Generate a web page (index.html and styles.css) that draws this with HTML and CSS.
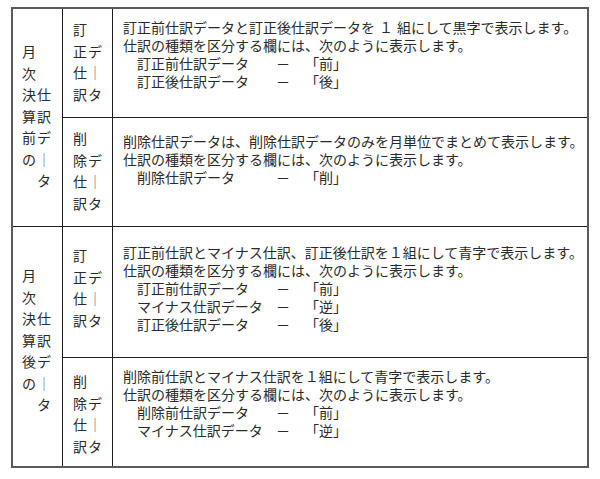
FILE: index.html
```html
<!DOCTYPE html>
<html lang="ja">
<head>
<meta charset="utf-8">
<title>仕訳データの表示</title>
<link rel="stylesheet" href="styles.css">
</head>
<body>
<div class="sheet">
  <div class="cat cat-span">
    <div class="stack">
      <div>月</div><div>次</div><div>決仕</div><div>算訳</div><div>前デ</div><div>の<span class="bar">｜</span></div><div>　タ</div>
    </div>
  </div>
  <div class="kind">
    <div class="stack">
      <div>訂</div><div>正デ</div><div>仕<span class="bar">｜</span></div><div>訳タ</div>
    </div>
  </div>
  <div class="desc desc-1">
    <p class="line">訂正前仕訳データと訂正後仕訳データを<span class="num">１</span>組にして黒字で表示します。</p>
    <p class="line">仕訳の種類を区分する欄には、次のように表示します。</p>
    <div class="codes">
      <span>訂正前仕訳データ</span><span>－</span><span>「前」</span>
      <span>訂正後仕訳データ</span><span>－</span><span>「後」</span>
    </div>
  </div>
  <div class="kind">
    <div class="stack">
      <div>削</div><div>除デ</div><div>仕<span class="bar">｜</span></div><div>訳タ</div>
    </div>
  </div>
  <div class="desc desc-2">
    <p class="line">削除仕訳データは、削除仕訳データのみを月単位でまとめて表示します。</p>
    <p class="line">仕訳の種類を区分する欄には、次のように表示します。</p>
    <div class="codes">
      <span>削除仕訳データ</span><span>－</span><span>「削」</span>
    </div>
  </div>

  <div class="cat cat-span cat-low">
    <div class="stack">
      <div>月</div><div>次</div><div>決仕</div><div>算訳</div><div>後デ</div><div>の<span class="bar">｜</span></div><div>　タ</div>
    </div>
  </div>
  <div class="kind kind-up">
    <div class="stack">
      <div>訂</div><div>正デ</div><div>仕<span class="bar">｜</span></div><div>訳タ</div>
    </div>
  </div>
  <div class="desc desc-3">
    <p class="line">訂正前仕訳とマイナス仕訳、訂正後仕訳を１組にして青字で表示します。</p>
    <p class="line">仕訳の種類を区分する欄には、次のように表示します。</p>
    <div class="codes">
      <span>訂正前仕訳データ</span><span>－</span><span>「前」</span>
      <span>マイナス仕訳データ</span><span>－</span><span>「逆」</span>
      <span>訂正後仕訳データ</span><span>－</span><span>「後」</span>
    </div>
  </div>
  <div class="kind kind-down">
    <div class="stack">
      <div>削</div><div>除デ</div><div>仕<span class="bar">｜</span></div><div>訳タ</div>
    </div>
  </div>
  <div class="desc desc-4">
    <p class="line">削除前仕訳とマイナス仕訳を１組にして青字で表示します。</p>
    <p class="line">仕訳の種類を区分する欄には、次のように表示します。</p>
    <div class="codes">
      <span>削除前仕訳データ</span><span>－</span><span>「前」</span>
      <span>マイナス仕訳データ</span><span>－</span><span>「逆」</span>
    </div>
  </div>
</div>
</body>
</html>
```

FILE: styles.css
```css
html, body {
  background: #ffffff;
}
body {
  margin: 7px 0 0 11px;
  font-family: "Liberation Serif", "Noto Sans CJK JP", serif;
  font-size: 14px;
  color: #2a2a2a;
}
.sheet {
  width: 578px;
  height: 461px;
  box-sizing: border-box;
  border: 2px solid #5a5a5a;
  display: grid;
  grid-template-columns: 49px 49px 1fr;
  grid-template-rows: 108px 108px 130px 1fr;
  gap: 1px;
  background: #1e1e1e;
}
.cat, .kind, .desc {
  background: #ffffff;
}
.cat-span {
  grid-row: span 2;
}
.cat, .kind {
  display: flex;
  align-items: center;
}
.cat {
  padding-left: 9px;
}
.cat-low {
  padding-bottom: 10px;
}
.kind {
  padding-left: 10px;
}
.kind-up {
  padding-bottom: 6px;
}
.kind-down {
  padding-top: 6px;
}
.stack {
  line-height: 21.5px;
  letter-spacing: 1px;
  white-space: nowrap;
}
.bar {
  color: #6a6a6a;
}
.desc {
  padding: 11px 0 0 10px;
  line-height: 18px;
}
.desc-2 { padding-top: 16px; }
.desc-3 { padding-top: 18px; }
.desc-4 { padding-top: 11px; }
.line {
  margin: 0;
  white-space: nowrap;
}
.num {
  margin: 0 4px;
}
.codes {
  display: grid;
  grid-template-columns: 139px 29px auto;
  padding-left: 14px;
  white-space: nowrap;
}
```
